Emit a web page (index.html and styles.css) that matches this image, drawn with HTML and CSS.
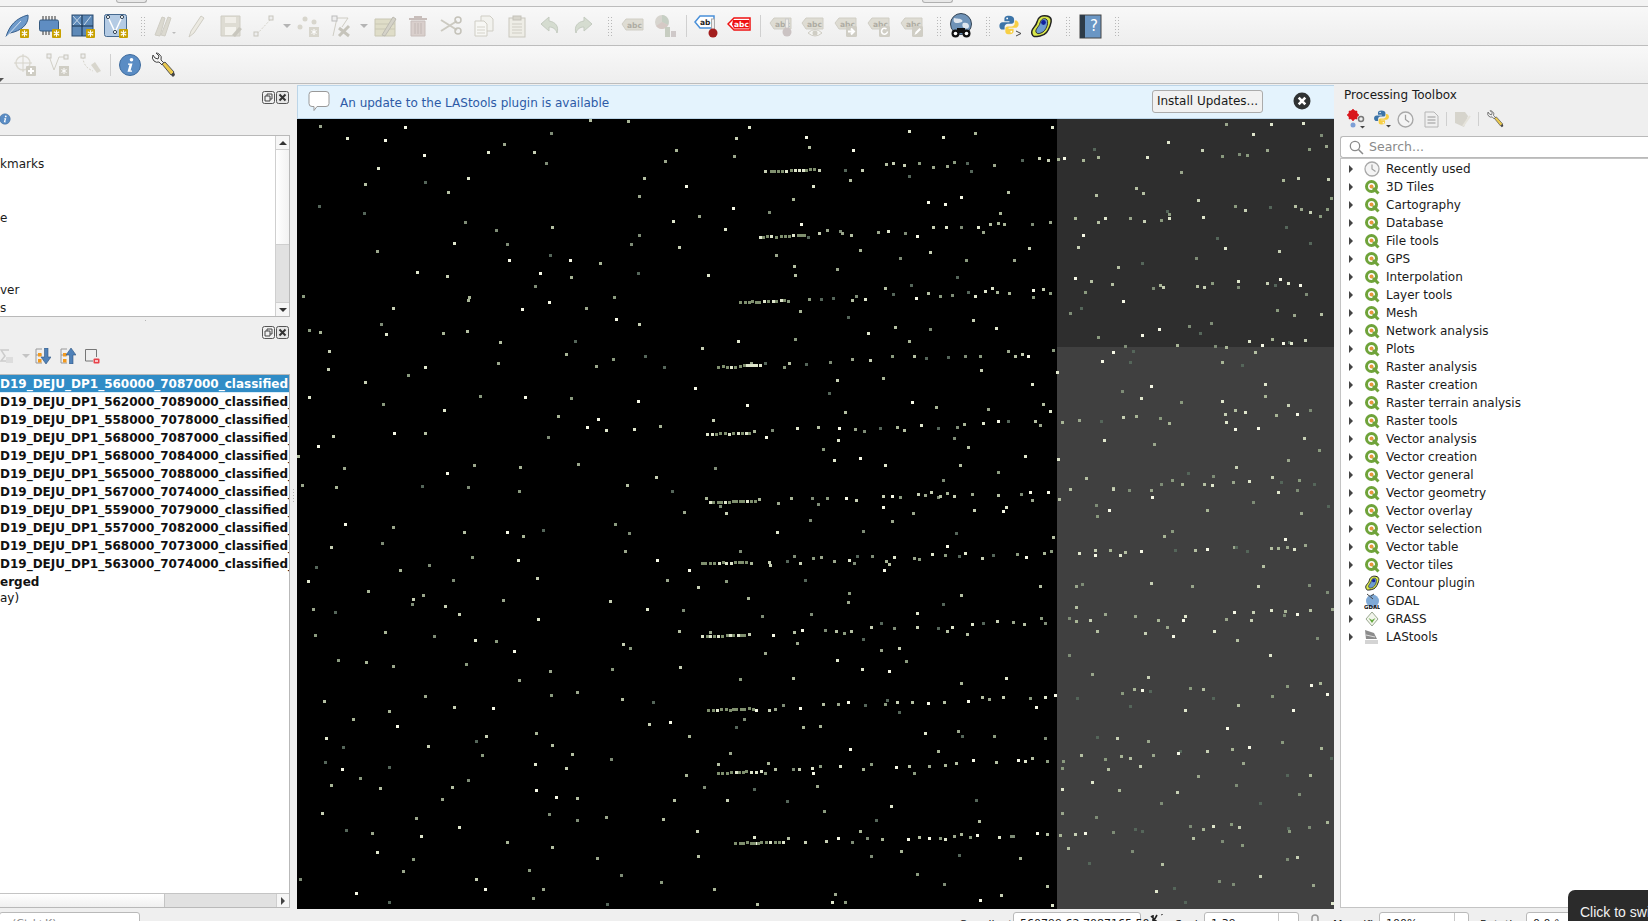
FILE: index.html
```html
<!DOCTYPE html>
<html lang="en">
<head>
<meta charset="utf-8">
<title>QGIS</title>
<link rel="stylesheet" href="styles.css">
</head>
<body>
<svg class="defs" width="0" height="0" aria-hidden="true">
  <defs>
    <symbol id="badge" viewBox="0 0 10 10"><rect width="10" height="10" rx="1" fill="#c8a100"/><path d="M5 1.500v7M2 3l6 4M8 3L2 7" stroke="#fff" stroke-width="1.300"/></symbol>
    <symbol id="q" viewBox="0 0 16 16"><circle cx="7.500" cy="7.500" r="5" fill="#fff" stroke="#6fa33a" stroke-width="3"/><circle cx="7.500" cy="7.500" r="2" fill="#e8963c"/><path d="M9 9l5.500 5.500" stroke="#6fa33a" stroke-width="3"/></symbol>
    <symbol id="clock" viewBox="0 0 16 16"><circle cx="8" cy="8" r="7" fill="#f4f4f4" stroke="#a8a8a8" stroke-width="1.300"/><path d="M8 3.500V8l3.500 2.500" fill="none" stroke="#a0a0a0" stroke-width="1.200"/></symbol>
    <symbol id="python" viewBox="0 0 24 24"><path d="M12 2C8 2 7 3.500 7 5.500V8h5.500v1H5c-2 0-3.500 1.500-3.500 4s1.500 4 3.500 4h2.200v-3c0-2 1.500-3.500 3.500-3.500h4.300c1.500 0 2.500-1 2.500-2.500V5.500C17.500 3.500 15.500 2 12 2z" fill="#3c74a8"/><path d="M12 22c4 0 5-1.500 5-3.500V16h-5.500v-1H19c2 0 3.500-1.500 3.500-4S21 7 19 7h-.8v3c0 2-1.500 3.500-3.500 3.500h-4.300C8.900 13.500 8 14.500 8 16v2.500c0 2 .5 3.500 4 3.500z" fill="#f7cf45"/><circle cx="10" cy="4.800" r="1" fill="#fff"/><circle cx="14.500" cy="19.300" r="1" fill="#fff"/></symbol>
    <symbol id="contour" viewBox="0 0 24 24"><path d="M3 20C1 15 7 13 8 8s5-7 10-6 5 5 3 10-4 9-10 10-7 1-8-2z" fill="#d8e84a" stroke="#222" stroke-width="1.500"/><path d="M7 18c-1-3 3-5 4-9s4-5 6-4 2 4 1 7-3 6-6 7-4 1-5-1z" fill="#6c9cd0" stroke="#333"/><circle cx="14.500" cy="8.500" r="2.400" fill="#10209c"/></symbol>
    <symbol id="wrench" viewBox="0 0 26 26"><path d="M3 3a5 5 0 0 0 1 6 5 5 0 0 0 5 1l3 3 2-2-3-3a5 5 0 0 0-2-6 5 5 0 0 0-3-1l3 3-1 3-3-1z" fill="#f4f4f4" stroke="#444"/><path d="M12 12l3-2 9 10-3 3z" fill="#eac94e" stroke="#555"/><path d="M21 23l3-3 1 3-2 2z" fill="#444"/></symbol>
    <symbol id="abc" viewBox="0 0 24 24"><path d="M2 10l4-5h17v11H6z" fill="#dedcd3" stroke="#d0cec5"/><text x="7" y="13.500" class="tag-text tag-dim">abc</text></symbol>
    <symbol id="dock" viewBox="0 0 13 13"><rect x=".5" y=".5" width="12" height="12" rx="2" fill="#f0f0f0" stroke="#555"/><path d="M3 5h5v5H3zM5 5V3h5v5H8" fill="none" stroke="#444"/></symbol>
    <symbol id="closebox" viewBox="0 0 13 13"><rect x=".5" y=".5" width="12" height="12" rx="2" fill="#e6e6e6" stroke="#555"/><path d="M3.500 3.500l6 6M9.500 3.500l-6 6" stroke="#333" stroke-width="2"/></symbol>
    <symbol id="info" viewBox="0 0 24 24"><circle cx="12" cy="12" r="10.500" fill="#5a8cc4" stroke="#3f6c9e"/><circle cx="13.500" cy="6.800" r="1.800" fill="#fff"/><path d="M10 10.500h4.500L12.500 17.500h1.500v1.200H9.500l2-7H10z" fill="#fff"/></symbol>
  </defs>
</svg>

<div class="strip"><span class="tab tab-a"></span><span class="tab tab-b"></span></div>

<div class="toolbar">
  <span class="tool"><svg width="26" height="26" viewBox="0 0 26 26"><path d="M2 24C5 13 12 5 24 2c1 7-4 14-14 17l-4 1z" fill="#6f9bcb" stroke="#375f8c"/><path d="M2 24L17 8" stroke="#d5e3f2"/><use href="#badge" x="16" y="16" width="9" height="9"/></svg></span>
  <span class="tool"><svg width="26" height="26" viewBox="0 0 26 26"><path d="M6 3v4M9 3v4M12 3v4M15 3v4M18 3v4M6 18v4M9 18v4M12 18v4" stroke="#333"/><rect x="2.500" y="7" width="19" height="11" rx="1.500" fill="#5f8dc2" stroke="#35597f"/><use href="#badge" x="15" y="16" width="9" height="9"/></svg></span>
  <span class="tool"><svg width="26" height="26" viewBox="0 0 26 26"><rect x="2" y="2" width="21" height="21" fill="#5d89b8" stroke="#2a4a6e"/><path d="M2 13h21M12 2v21" stroke="#17304d"/><path d="M3 3l8 9M11 3l-8 9M14 12l7-9" stroke="#c8d9ea"/><use href="#badge" x="16" y="16" width="9" height="9"/></svg></span>
  <span class="tool"><svg width="26" height="26" viewBox="0 0 26 26"><rect x="1.500" y="1.500" width="22" height="22" rx="2" fill="#b4cbe4" stroke="#46698f"/><path d="M5 4l7 15 7-15" fill="none" stroke="#fff" stroke-width="1.500"/><circle cx="5" cy="4" r="1.600" fill="#fff" stroke="#345"/><circle cx="19" cy="4" r="1.600" fill="#fff" stroke="#345"/><circle cx="12" cy="19" r="1.600" fill="#fff" stroke="#345"/><use href="#badge" x="16" y="16" width="9" height="9"/></svg></span>
  <span class="grip"></span>
  <span class="tool"><svg width="24" height="24" viewBox="0 0 24 24"><path d="M2 21L9 3l3 1-5 18zM8 21l7-18 3 1-6 18z" fill="#dbd9d0" stroke="#cfcdc4"/><path d="M19 18h4l-2 2z" fill="#bbb"/></svg></span>
  <span class="tool tool-narrow"><svg width="24" height="24" viewBox="0 0 24 24"><path d="M5 23l2-6L17 2l3 2-10 15z" fill="#eceae2" stroke="#cfcdc4"/></svg></span>
  <span class="tool"><svg width="24" height="24" viewBox="0 0 24 24"><path d="M2 2h19v20H2z" fill="#dedcd3" stroke="#cfcdc4"/><rect x="6" y="3" width="11" height="6" fill="#f0eee8"/><rect x="6" y="13" width="11" height="8" fill="#f4f3ee"/><path d="M13 21l7-8 3 2-7 8z" fill="#c9c7be"/></svg></span>
  <span class="tool tool-drop"><svg width="22" height="24" viewBox="0 0 22 24"><path d="M4 20L18 5" stroke="#d5d3ca" stroke-dasharray="2 1.500"/><rect x="1" y="18" width="4" height="4" fill="#eee" stroke="#c8c6bd"/><rect x="16" y="2" width="4" height="4" fill="#eee" stroke="#c8c6bd"/></svg><i class="caret"></i></span>
  <span class="tool"><svg width="24" height="24" viewBox="0 0 24 24"><circle cx="9" cy="5" r="2.500" fill="#d8d6cd"/><circle cx="18" cy="8" r="2.500" fill="#d8d6cd"/><circle cx="4" cy="13" r="2.500" fill="#d8d6cd"/><rect x="13" y="13" width="10" height="10" fill="#d8d6cd"/><path d="M18 15v6M15.500 16.500l5 3M20.500 16.500l-5 3" stroke="#fff"/></svg></span>
  <span class="tool tool-drop"><svg width="22" height="24" viewBox="0 0 22 24"><path d="M3 22L7 4h11L12 13" fill="none" stroke="#cfcdc4"/><path d="M9 14l10 8M19 12L9 22" stroke="#c6c4bb" stroke-width="3"/><rect x="2" y="2" width="5" height="5" fill="#eee" stroke="#bbb"/></svg><i class="caret"></i></span>
  <span class="tool"><svg width="24" height="24" viewBox="0 0 24 24"><path d="M2 5h20v17H2z" fill="#dfddc8" stroke="#c9c7b4"/><path d="M2 10h20M2 15h20" stroke="#c9c7b4"/><path d="M9 21L20 3l3 2-11 17z" fill="#d4d2c8" stroke="#bdbbb2"/></svg></span>
  <span class="tool"><svg width="22" height="24" viewBox="0 0 22 24"><path d="M2 5h18M8 5V3h6v2" fill="none" stroke="#c8bebb" stroke-width="2"/><path d="M4 7h14v15H4z" fill="#d9cfcc" stroke="#c8bebb"/><path d="M8 9v11M11 9v11M14 9v11" stroke="#c2b8b5"/></svg></span>
  <span class="tool"><svg width="24" height="24" viewBox="0 0 24 24"><path d="M2 6l16 10M2 17L18 7" stroke="#cccac1" stroke-width="2"/><circle cx="19" cy="6" r="3" fill="none" stroke="#c4c2b9" stroke-width="1.500"/><circle cx="19" cy="17" r="3" fill="none" stroke="#c4c2b9" stroke-width="1.500"/></svg></span>
  <span class="tool"><svg width="20" height="24" viewBox="0 0 20 24"><path d="M7 2h9l3 3v12H7z" fill="#f2f2ee" stroke="#cfcdc4"/><path d="M1 7h9l3 3v12H1z" fill="#f7f7f4" stroke="#cfcdc4"/><path d="M3 13h8M3 16h8M3 19h8" stroke="#d5d3ca"/></svg></span>
  <span class="tool"><svg width="20" height="24" viewBox="0 0 20 24"><rect x="2" y="4" width="16" height="19" fill="#eeede6" stroke="#c9c7be"/><rect x="6" y="2" width="8" height="4" fill="#d8d6cd" stroke="#c4c2b9"/><path d="M5 10h10M5 13h10M5 16h10M5 19h10" stroke="#cfcdc4"/></svg></span>
  <span class="tool"><svg width="22" height="22" viewBox="0 0 22 22"><path d="M10 2L2 9l8 7v-4c4 0 7 2 8 6 2-6-1-11-8-12z" fill="#d5dcd0" stroke="#c4cbc0"/></svg></span>
  <span class="tool"><svg width="22" height="22" viewBox="0 0 22 22"><path d="M12 2l8 7-8 7v-4c-4 0-7 2-8 6-2-6 1-11 8-12z" fill="#d5dcd0" stroke="#c4cbc0"/></svg></span>
  <span class="grip"></span>
  <span class="tool"><svg width="24" height="24"><use href="#abc"/></svg></span>
  <span class="tool"><svg width="24" height="24" viewBox="0 0 24 24"><circle cx="9" cy="8" r="7" fill="#d7d5cf"/><path d="M9 8V1a7 7 0 0 1 6 10z" fill="#c6cfc4"/><path d="M9 8l6 3a7 7 0 0 1-12 1z" fill="#d5c9c5"/><rect x="12" y="13" width="5" height="10" fill="#c7cdc1"/><rect x="18" y="17" width="5" height="6" fill="#cfc9c9"/></svg></span>
  <span class="sep"></span>
  <span class="tool"><svg width="24" height="26" viewBox="0 0 24 26"><path d="M1 9l5-6h14v12H6z" fill="#fff" stroke="#4a90d9" stroke-width="1.500"/><text x="6" y="12" class="tag-text tag-dark">ab</text><rect x="17.500" y="6" width="3" height="11" fill="#eee" stroke="#aaa"/><circle cx="19" cy="20" r="4.500" fill="#a31d1d"/></svg></span>
  <span class="tool"><svg width="24" height="24" viewBox="0 0 24 24"><path d="M1 10l6-6h16v12H7z" fill="#fff" stroke="#ee1111" stroke-width="1.500"/><path d="M6 6h16v8.500H7l-2-4z" fill="#ee1111"/><text x="7" y="13.200" class="tag-text tag-light">abc</text></svg></span>
  <span class="sep"></span>
  <span class="tool"><svg width="24" height="26" viewBox="0 0 24 26"><use href="#abc" width="24" height="24"/><rect x="17.500" y="6" width="3" height="11" fill="#eeedea" stroke="#ccc"/><circle cx="19" cy="19" r="4.500" fill="#cbc3c3"/></svg></span>
  <span class="tool"><svg width="26" height="26" viewBox="0 0 26 26"><use href="#abc" width="24" height="24"/><path d="M8 20q7-7 14 0-7 6-14 0z" fill="#f3f3f0" stroke="#cfcdc4"/><circle cx="15" cy="20" r="2.500" fill="#cfcdc4"/></svg></span>
  <span class="tool"><svg width="26" height="26" viewBox="0 0 26 26"><use href="#abc" width="24" height="24"/><rect x="13" y="13" width="11" height="11" rx="1.500" fill="#d0cec5"/><path d="M15 18.500h5M18 15.500l3 3-3 3" fill="none" stroke="#fff" stroke-width="2"/></svg></span>
  <span class="tool"><svg width="26" height="26" viewBox="0 0 26 26"><use href="#abc" width="24" height="24"/><rect x="13" y="13" width="11" height="11" rx="1.500" fill="#d0cec5"/><path d="M21.500 18.500a3 3 0 1 1-1-2.500" fill="none" stroke="#fff" stroke-width="1.500"/></svg></span>
  <span class="tool"><svg width="26" height="26" viewBox="0 0 26 26"><use href="#abc" width="24" height="24"/><rect x="13" y="13" width="11" height="11" rx="1.500" fill="#d0cec5"/><path d="M15.500 22l1-3 4-4 1.500 1.500-4 4z" fill="#fff"/></svg></span>
  <span class="grip"></span>
  <span class="tool"><svg width="26" height="26" viewBox="0 0 26 26"><circle cx="13" cy="11" r="10.500" fill="#6f93b8" stroke="#345"/><path d="M6 5c3 1 6 0 8 2s-2 3-5 3-4-2-3-5zM15 10c3-1 6 0 6 3s-3 3-5 2-2-4-1-5z" fill="#dfe6ee"/><circle cx="7.500" cy="20.500" r="4" fill="#111"/><circle cx="18.500" cy="20.500" r="4" fill="#111"/><circle cx="7.500" cy="20.500" r="1.800" fill="#fff"/><circle cx="18.500" cy="20.500" r="1.800" fill="#fff"/><rect x="9" y="15" width="8" height="5" fill="#111"/></svg></span>
  <span class="grip"></span>
  <span class="tool tool-py"><svg width="26" height="26" viewBox="0 0 26 26"><use href="#python" width="22" height="22" y="1"/><path d="M18 18l5 2.500-5 2.500" fill="none" stroke="#444"/></svg></span>
  <span class="tool"><svg width="24" height="24"><use href="#contour"/></svg></span>
  <span class="grip"></span>
  <span class="tool"><svg width="24" height="26" viewBox="0 0 24 26"><rect x="2" y="2" width="21" height="23" fill="#6a96c4" stroke="#444"/><rect x="2" y="2" width="5" height="23" fill="#2d3b48"/></svg><span class="qmark">?</span></span>
  <span class="grip"></span>
</div>

<div class="toolbar toolbar-two">
  <i class="caret caret-edge"></i>
  <span class="tool"><svg width="24" height="24" viewBox="0 0 24 24"><circle cx="10" cy="10" r="7" fill="none" stroke="#dcdad2" stroke-width="1.500"/><path d="M10 1v18M1 10h18" stroke="#d6d4cb"/><rect x="13" y="13" width="10" height="10" rx="1" fill="#cfcdc4"/><path d="M15 18h6M18 15v6" stroke="#fff" stroke-width="2"/></svg></span>
  <span class="tool"><svg width="24" height="24" viewBox="0 0 24 24"><path d="M3 3l5 14 5-13h7" fill="none" stroke="#d2d0c7"/><rect x="1" y="1" width="4" height="4" fill="#eee" stroke="#c8c6bd"/><rect x="18" y="2" width="4" height="4" fill="#eee" stroke="#c8c6bd"/><rect x="13" y="13" width="10" height="10" fill="#cfcdc4"/><path d="M18 15v6M15.500 16.500l5 3M20.500 16.500l-5 3" stroke="#fff"/></svg></span>
  <span class="tool"><svg width="22" height="24" viewBox="0 0 22 24"><path d="M3 4c0 8 5 12 10 14" fill="none" stroke="#d5d3ca" stroke-dasharray="2 1.500"/><rect x="1" y="1" width="4" height="4" fill="#eee" stroke="#c8c6bd"/><path d="M11 12l4-3 6 9-4 2z" fill="#d8d6cd"/></svg></span>
  <span class="sep sep-tight"></span>
  <span class="tool"><svg width="24" height="24"><use href="#info"/></svg></span>
  <span class="tool"><svg width="26" height="26"><use href="#wrench"/></svg></span>
</div>

<main class="workspace">
  <aside class="left-dock">
    <div class="dock-title"><svg width="13" height="13"><use href="#dock"/></svg><svg width="13" height="13"><use href="#closebox"/></svg></div>
    <div class="dock-tools"><svg class="edge-info" width="12" height="12"><use href="#info"/></svg></div>
    <div class="browser">
      <ul class="rows">
        <li></li><li>kmarks</li><li></li><li></li><li>e</li><li></li><li></li><li></li><li>ver</li><li>s</li>
      </ul>
      <div class="vscroll">
        <span class="scroll-btn"><i class="tri tri-up"></i></span>
        <span class="vscroll-track"></span>
        <span class="vscroll-thumb"></span>
        <span class="scroll-btn"><i class="tri tri-down"></i></span>
      </div>
    </div>
    <div class="splitter"></div>
    <div class="dock-title dock-title-layers"><svg width="13" height="13"><use href="#dock"/></svg><svg width="13" height="13"><use href="#closebox"/></svg></div>
    <div class="layer-tools">
      <svg width="14" height="16" viewBox="0 0 14 16"><path d="M9 2H1l4 6-4 5h8" fill="none" stroke="#ccc" stroke-width="1.500"/><rect x="6" y="9" width="7" height="6" fill="#ddd"/></svg>
      <i class="caret caret-tools"></i>
      <svg class="lt-a" width="16" height="16" viewBox="0 0 16 16"><path d="M1 1h6M1 1v14h6M1 7h6" fill="none" stroke="#999"/><rect x="3" y="5" width="3.500" height="3.500" fill="#f29a1e"/><rect x="3" y="11" width="3.500" height="3.500" fill="#f29a1e"/><path d="M9.500 0h3.500v9h3l-5 7-5-7h3.500z" fill="#4f81b8" stroke="#2f557f" stroke-width=".6"/></svg>
      <svg class="lt-b" width="16" height="16" viewBox="0 0 16 16"><path d="M1 1h6M1 1v14h6M1 7h6" fill="none" stroke="#999"/><rect x="3" y="5" width="3.500" height="3.500" fill="#f29a1e"/><rect x="3" y="11" width="3.500" height="3.500" fill="#f29a1e"/><path d="M9.500 16h3.500V7h3L11 0 6 7h3.500z" fill="#4f81b8" stroke="#2f557f" stroke-width=".6"/></svg>
      <svg class="lt-c" width="15" height="15" viewBox="0 0 15 15"><path d="M8 12H.5V.5h11V8" fill="none" stroke="#777"/><rect x="8.500" y="9.500" width="6" height="5" rx="1" fill="#e8424a"/><path d="M10 12h3" stroke="#fff" stroke-width="1.400"/></svg>
    </div>
    <div class="layers">
      <ul class="layer-rows">
        <li class="selected">D19_DEJU_DP1_560000_7087000_classified</li>
        <li>D19_DEJU_DP1_562000_7089000_classified_</li>
        <li>D19_DEJU_DP1_558000_7078000_classified_</li>
        <li>D19_DEJU_DP1_568000_7087000_classified_</li>
        <li>D19_DEJU_DP1_568000_7084000_classified_</li>
        <li>D19_DEJU_DP1_565000_7088000_classified_</li>
        <li>D19_DEJU_DP1_567000_7074000_classified_</li>
        <li>D19_DEJU_DP1_559000_7079000_classified_</li>
        <li>D19_DEJU_DP1_557000_7082000_classified_</li>
        <li>D19_DEJU_DP1_568000_7073000_classified_</li>
        <li>D19_DEJU_DP1_563000_7074000_classified_</li>
        <li>erged</li>
        <li class="plain">ay)</li>
      </ul>
      <div class="hscroll">
        <span class="hscroll-thumb"></span>
        <span class="hscroll-track"></span>
        <span class="scroll-btn scroll-btn-h"><i class="tri tri-right"></i></span>
      </div>
    </div>
  </aside>

  <div class="gutter"><span class="gutter-grip"></span></div>

  <section class="canvas-col">
    <div class="message">
      <svg width="22" height="22" viewBox="0 0 22 22"><path d="M4 1.500h14a3 3 0 0 1 3 3v9a3 3 0 0 1-3 3H9l-3 4v-4H4a3 3 0 0 1-3-3v-9a3 3 0 0 1 3-3z" fill="#fff" stroke="#999"/></svg>
      <span class="message-text">An update to the LAStools plugin is available</span>
      <button class="install" type="button">Install Updates...</button>
      <svg class="message-close" width="18" height="18" viewBox="0 0 18 18"><circle cx="9" cy="9" r="8.500" fill="#2f3233"/><path d="M5.700 5.700l6.600 6.600M12.300 5.700l-6.600 6.600" stroke="#fff" stroke-width="2.600"/></svg>
    </div>
    <canvas id="map" class="map" width="1037" height="790"></canvas>
  </section>

  <div class="gutter gutter-right"></div>

  <aside class="toolbox">
    <div class="toolbox-title">Processing Toolbox</div>
    <div class="toolbox-tools">
      <svg class="tt-gear" width="20" height="20" viewBox="0 0 20 20"><circle cx="6" cy="6" r="3.500" fill="none" stroke="#d9161c" stroke-width="3"/><path d="M6 0v12M0 6h12M2 2l8 8M10 2l-8 8" stroke="#d9161c" stroke-width="1.500"/><circle cx="14" cy="10" r="2.500" fill="none" stroke="#777" stroke-width="1.500"/><circle cx="6" cy="16" r="2.500" fill="#7d9fd6"/><path d="M13 17h5l-2.500 2.500z" fill="#444"/></svg>
      <svg class="tt-py" width="20" height="20" viewBox="0 0 20 20"><use href="#python" width="17" height="17"/><path d="M13 16h5l-2.500 2.500z" fill="#444"/></svg>
      <svg class="tt-clock" width="17" height="17"><use href="#clock"/></svg>
      <svg class="tt-doc" width="15" height="17" viewBox="0 0 15 17"><path d="M1 1h9l4 4v11H1z" fill="#efefef" stroke="#b5b5b5"/><path d="M3.500 6h8M3.500 9h8M3.500 12h8" stroke="#b5b5b5" stroke-width="1.300"/></svg>
      <span class="tb-sep"></span>
      <svg class="tt-shape" width="17" height="17" viewBox="0 0 17 17"><path d="M1 1h10l3 4-4 11-9-4z" fill="#d6d4cc"/><path d="M9 15l7-10" stroke="#e5e3db" stroke-width="2"/></svg>
      <span class="tb-sep"></span>
      <svg class="tt-wrench" width="18" height="18"><use href="#wrench" width="18" height="18"/></svg>
    </div>
    <label class="search">
      <svg width="15" height="15" viewBox="0 0 15 15"><circle cx="6" cy="6" r="4.700" fill="none" stroke="#8a8a8a" stroke-width="1.300"/><path d="M9.500 9.500l4.500 4.500" stroke="#8a8a8a" stroke-width="1.500"/></svg>
      <span>Search...</span>
    </label>
    <ul class="tree">
      <li><i class="tri tri-right"></i><svg width="16" height="16"><use href="#clock"/></svg>Recently used</li>
      <li><i class="tri tri-right"></i><svg width="16" height="16"><use href="#q"/></svg>3D Tiles</li>
      <li><i class="tri tri-right"></i><svg width="16" height="16"><use href="#q"/></svg>Cartography</li>
      <li><i class="tri tri-right"></i><svg width="16" height="16"><use href="#q"/></svg>Database</li>
      <li><i class="tri tri-right"></i><svg width="16" height="16"><use href="#q"/></svg>File tools</li>
      <li><i class="tri tri-right"></i><svg width="16" height="16"><use href="#q"/></svg>GPS</li>
      <li><i class="tri tri-right"></i><svg width="16" height="16"><use href="#q"/></svg>Interpolation</li>
      <li><i class="tri tri-right"></i><svg width="16" height="16"><use href="#q"/></svg>Layer tools</li>
      <li><i class="tri tri-right"></i><svg width="16" height="16"><use href="#q"/></svg>Mesh</li>
      <li><i class="tri tri-right"></i><svg width="16" height="16"><use href="#q"/></svg>Network analysis</li>
      <li><i class="tri tri-right"></i><svg width="16" height="16"><use href="#q"/></svg>Plots</li>
      <li><i class="tri tri-right"></i><svg width="16" height="16"><use href="#q"/></svg>Raster analysis</li>
      <li><i class="tri tri-right"></i><svg width="16" height="16"><use href="#q"/></svg>Raster creation</li>
      <li><i class="tri tri-right"></i><svg width="16" height="16"><use href="#q"/></svg>Raster terrain analysis</li>
      <li><i class="tri tri-right"></i><svg width="16" height="16"><use href="#q"/></svg>Raster tools</li>
      <li><i class="tri tri-right"></i><svg width="16" height="16"><use href="#q"/></svg>Vector analysis</li>
      <li><i class="tri tri-right"></i><svg width="16" height="16"><use href="#q"/></svg>Vector creation</li>
      <li><i class="tri tri-right"></i><svg width="16" height="16"><use href="#q"/></svg>Vector general</li>
      <li><i class="tri tri-right"></i><svg width="16" height="16"><use href="#q"/></svg>Vector geometry</li>
      <li><i class="tri tri-right"></i><svg width="16" height="16"><use href="#q"/></svg>Vector overlay</li>
      <li><i class="tri tri-right"></i><svg width="16" height="16"><use href="#q"/></svg>Vector selection</li>
      <li><i class="tri tri-right"></i><svg width="16" height="16"><use href="#q"/></svg>Vector table</li>
      <li><i class="tri tri-right"></i><svg width="16" height="16"><use href="#q"/></svg>Vector tiles</li>
      <li><i class="tri tri-right"></i><svg width="16" height="16"><use href="#contour"/></svg>Contour plugin</li>
      <li><i class="tri tri-right"></i><svg width="16" height="16" viewBox="0 0 16 16"><ellipse cx="8.500" cy="8" rx="6.500" ry="6.500" fill="#7fa9d6"/><path d="M3 1l6 5M7 3l3-2" stroke="#444"/><text x="0" y="15.500" class="gdal-text">GDAL</text></svg>GDAL</li>
      <li><i class="tri tri-right"></i><svg width="16" height="16" viewBox="0 0 16 16"><path d="M8 1l6 7-6 7-6-7z" fill="#f2f5ec" stroke="#9aa890"/><path d="M4.500 7L8 12l3.500-5L8 9z" fill="#63a83c"/></svg>GRASS</li>
      <li><i class="tri tri-right"></i><svg width="16" height="16" viewBox="0 0 16 16"><path d="M1 1l9 3 3 6H2z" fill="#8c8c8c"/><path d="M2 6l9 2" stroke="#ddd"/><rect x="1" y="11" width="13" height="4" fill="#d4d4d4"/></svg>LAStools</li>
    </ul>
  </aside>
</main>

<footer class="status">
  <span class="field field-locate">(Ctrl+K)</span>
  <span class="status-label label-coord">Coordinate</span>
  <span class="field field-coord">560799.62,7087165.50</span>
  <svg class="status-ico" width="16" height="14" viewBox="0 0 16 14"><path d="M3 2l9 9M5 1v9M9 1l-5 9" stroke="#222" stroke-width="1.600"/><path d="M13 1l2-1" stroke="#444"/></svg>
  <span class="status-label label-scale">Scale</span>
  <span class="field field-scale">1:39<span class="field-drop"></span></span>
  <svg class="status-lock" width="14" height="14" viewBox="0 0 14 14"><path d="M4 8V5a3 3 0 0 1 6 0v3" fill="none" stroke="#999" stroke-width="1.500"/></svg>
  <span class="status-label label-mag">Magnifier</span>
  <span class="field field-mag">100%<span class="spin"></span></span>
  <span class="status-label label-rot">Rotation</span>
  <span class="field field-rot">0.0 °</span>
</footer>

<div class="toast">Click to switch</div>

<script src="script.js"></script>
</body>
</html>
```
FILE: styles.css
```css
* { box-sizing: border-box; }
html, body { margin: 0; padding: 0; height: 921px; overflow: hidden; }
body { width: 1648px; background: #efefef; font: 12px/18px "DejaVu Sans", sans-serif; color: #1a1a1a; position: relative; }
ul { list-style: none; margin: 0; padding: 0; }
svg { display: block; flex: none; }
.defs { position: absolute; }

.tag-text { font: 700 7.500px "DejaVu Sans", sans-serif; }
.tag-dim { fill: #aeaca3; }
.tag-dark { fill: #222222; }
.tag-light { fill: #ffffff; }
.gdal-text { font: 700 5.400px "DejaVu Sans", sans-serif; fill: #111111; }

.strip { height: 7px; background: #f3f3f3; border-bottom: 1px solid #bcbcbc; display: flex; align-items: flex-start; }
.tab { display: block; width: 31px; height: 3px; background: #e8e8e8; border: 1px solid #b0b0b0; border-top: 0; border-radius: 0 0 3px 3px; }
.tab-a { margin-left: 116px; }
.tab-b { margin-left: 775px; }

.toolbar { height: 39px; display: flex; align-items: center; background: linear-gradient(#f8f8f8, #eeeeee); border-bottom: 1px solid #bdbdbd; }
.toolbar-two { height: 38px; border-bottom-width: 1px; }
.tool { width: 33px; height: 30px; display: flex; align-items: center; justify-content: center; flex: none; position: relative; }
.tool-narrow { padding-right: 4px; }
.tool-py { margin-right: -2px; padding-left: 3px; }
.tool-drop { width: 44px; justify-content: flex-start; padding-left: 6px; gap: 8px; }
.caret { display: block; width: 0; height: 0; border: 4px solid transparent; border-top: 4px solid #b4b4b4; border-bottom: 0; }
.caret-edge { position: relative; top: 15px; margin-right: 4px; border-left-width: 0; border-top-color: #555; }
.grip { width: 5px; height: 20px; margin: 0 3px 0 8px; background: radial-gradient(circle, #b8b8b8 0.8px, transparent 1px) 0 0 / 3px 3px; flex: none; }
.sep { width: 1px; height: 22px; margin: 0 2px 0 5px; background: #d0d0d0; flex: none; }
.sep-tight { margin-left: 3px; }
.qmark { position: absolute; left: 14px; top: 5px; width: 14px; text-align: center; color: #fff; font: 15px/20px "DejaVu Sans", sans-serif; }

.workspace { display: flex; height: 824px; }
.left-dock { width: 290px; display: flex; flex-direction: column; flex: none; }
.dock-title { height: 20px; display: flex; justify-content: flex-end; align-items: flex-end; gap: 1px; padding-right: 1px; }
.dock-tools { height: 31px; padding-top: 9px; }
.edge-info { margin-left: -1px; }
.browser { height: 182px; display: flex; background: #fff; border: 1px solid #b9b9b9; border-left: 0; }
.rows { flex: 1; padding-top: 1px; overflow: hidden; }
.rows li { height: 18px; line-height: 18px; }
.vscroll { width: 14px; display: flex; flex-direction: column; background: linear-gradient(90deg, #ffffff, #f2f2f2); border-left: 1px solid #cfcfcf; flex: none; }
.scroll-btn { height: 14px; display: flex; align-items: center; justify-content: center; flex: none; background: #f6f6f6; border-bottom: 1px solid #cfcfcf; }
.vscroll .scroll-btn:last-child { border-bottom: 0; border-top: 1px solid #cfcfcf; }
.vscroll-track { flex: 1; }
.vscroll-thumb { height: 58px; background: #e1e1e1; border-top: 1px solid #cfcfcf; }
.tri { display: block; width: 0; height: 0; border: 4px solid transparent; flex: none; }
.tri-up { border-top: 0; border-bottom: 4px solid #333; }
.tri-down { border-bottom: 0; border-top: 4px solid #333; }
.tri-right { border-right: 0; border-left: 4px solid #444; }
.splitter { height: 7px; background: radial-gradient(circle, #b5b5b5 0.6px, transparent 1px) center / 3px 3px no-repeat; }
.dock-title-layers { height: 15px; }
.layer-tools { height: 35px; display: flex; align-items: center; padding-bottom: 1px; }
.caret-tools { margin-left: 8px; border-top-color: #c4c4c4; }
.lt-a { margin-left: 5px; }
.lt-b { margin-left: 9px; }
.lt-c { margin-left: 9px; }
.layers { flex: 1; min-height: 0; display: flex; flex-direction: column; background: #fff; border: 1px solid #b9b9b9; border-left: 0; }
.layer-rows { flex: 1; overflow: hidden; }
.layer-rows li { height: 18px; line-height: 18px; font-weight: 700; white-space: nowrap; overflow: hidden; color: #111; }
.layer-rows .selected { background: #308cc6; color: #fff; border-bottom: 1px solid #d9ecf8; line-height: 18px; }
.layer-rows .plain { font-weight: 400; height: 16px; line-height: 14px; }
.hscroll { height: 14px; display: flex; border-top: 1px solid #c4c4c4; flex: none; }
.hscroll-thumb { width: 165px; background: linear-gradient(#ffffff, #f0f0f0); border-right: 1px solid #c4c4c4; }
.hscroll-track { flex: 1; background: #e1e1e1; }
.scroll-btn-h { width: 13px; height: 13px; border-bottom: 0; border-left: 1px solid #cfcfcf; }

.gutter { width: 7px; flex: none; display: flex; align-items: center; justify-content: center; }
.gutter-right { width: 6px; }
.gutter-grip { width: 3px; height: 16px; background: radial-gradient(circle, #b0b0b0 0.7px, transparent 1px) 0 0 / 3px 3px; }

.canvas-col { width: 1037px; display: flex; flex-direction: column; flex: none; }
.message { height: 34px; margin-top: 1px; flex: none; display: flex; align-items: center; padding: 0 0 2px 10px; background: #e4f3fd; border: 1px solid #bcd5e8; border-right-width: 0; }
.message-text { margin: 4px 0 0 10px; color: #2c5aa6; font-size: 12px; flex: 1; }
.install { width: 111px; height: 23px; padding: 0; background: #f1f1f1; border: 1px solid #ababab; border-radius: 3px; font: 12px "DejaVu Sans", sans-serif; color: #1a1a1a; }
.message-close { margin: 0 23px 0 30px; }
.map { display: block; width: 1037px; height: 790px; flex: none; }

.toolbox { flex: 1; min-width: 0; display: flex; flex-direction: column; }
.toolbox-title { height: 20px; padding: 2px 0 0 4px; line-height: 18px; }
.toolbox-tools { height: 30px; display: flex; align-items: center; }
.tt-gear { margin-left: 7px; }
.tt-py { margin-left: 6px; }
.tt-clock { margin-left: 4px; }
.tt-doc { margin-left: 10px; }
.tb-sep { width: 1px; height: 14px; margin: 0 7px; background: #cfcfcf; }
.search { height: 22px; margin-top: 2px; display: flex; align-items: center; gap: 5px; padding-left: 8px; background: #fff; border: 1px solid #b9b9b9; border-right: 0; border-radius: 3px 0 0 3px; color: #8a8a8a; font-size: 12.500px; }
.tree { flex: 1; padding-top: 1px; background: #fff; border: 1px solid #c4c4c4; border-right: 0; }
.tree li { height: 18px; display: flex; align-items: center; padding-left: 8px; white-space: nowrap; }
.tree li svg { margin: 0 6px 0 11px; }

.status { height: 13px; display: flex; align-items: flex-start; overflow: hidden; background: #efefef; }
.field { height: 24px; margin-top: 4px; background: #fff; border: 1px solid #b9b9b9; border-radius: 3px; padding-left: 6px; font-size: 11px; line-height: 22px; flex: none; position: relative; white-space: nowrap; }
.field-locate { width: 141px; margin-left: -1px; padding-left: 12px; color: #888; }
.status-label { margin-top: 6px; flex: none; font-size: 11px; line-height: 22px; }
.label-coord { margin-left: 819px; width: 54px; }
.field-coord { width: 128px; }
.status-ico { margin: 6px 0 0 7px; }
.label-scale { margin-left: 11px; width: 29px; }
.field-scale { width: 95px; }
.field-drop { position: absolute; right: 0; top: 0; bottom: 0; width: 20px; border-left: 1px solid #c8c8c8; }
.status-lock { margin: 5px 0 0 9px; }
.label-mag { margin-left: 11px; width: 46px; }
.field-mag { width: 90px; }
.spin { position: absolute; right: 0; top: 0; bottom: 0; width: 14px; border-left: 1px solid #c8c8c8; }
.label-rot { margin-left: 11px; width: 46px; }
.field-rot { width: 60px; }

.toast { position: absolute; left: 1568px; top: 890px; width: 80px; height: 31px; overflow: hidden; padding: 12px 0 0 12px; background: #2b2b2b; border-radius: 7px 0 0 0; color: #f2f2f2; font: 14px/20px "Liberation Sans", sans-serif; white-space: nowrap; }
```
FILE: script.js
```js
(function () {
  var canvas = document.getElementById('map');
  var ctx = canvas.getContext('2d');
  var W = canvas.width, H = canvas.height;
  var seed = 20190611;

  function rnd() {
    seed = (seed * 1664525 + 1013904223) >>> 0;
    return seed / 4294967296;
  }

  ctx.fillStyle = '#000000';
  ctx.fillRect(0, 0, 760, H);
  ctx.fillStyle = '#2e2e2e';
  ctx.fillRect(760, 0, W - 760, 228);
  ctx.fillStyle = '#404040';
  ctx.fillRect(760, 228, W - 760, H - 228);

  var palette = ['#b4bfa2', '#a8b596', '#c6cfb4', '#9aa68c', '#dfe6cc', '#f6f8e6', '#7e8c76', '#55665a', '#8a9a7e'];

  function dot(x, y, size, colour) {
    ctx.fillStyle = colour;
    ctx.fillRect(Math.round(x), Math.round(y), size, size);
  }

  // scattered returns
  for (var gx = 0; gx < W; gx += 30) {
    for (var gy = 0; gy < H; gy += 30) {
      if (rnd() < 0.78) {
        var px = gx + rnd() * 30, py = gy + rnd() * 30;
        if (px < 760 && rnd() < 0.18) { continue; }
        dot(px, py, 3, palette[Math.floor(rnd() * palette.length)]);
      }
    }
  }

  // flight-line streaks, in canvas coordinates
  var streaks = [
    [473, 51, 754, 40], [462, 117, 754, 103], [442, 182, 754, 171], [420, 247, 754, 232],
    [409, 314, 743, 302], [412, 382, 744, 371], [404, 443, 754, 434], [404, 516, 754, 502],
    [410, 590, 754, 576], [420, 653, 754, 639], [437, 723, 754, 713]
  ];

  streaks.forEach(function (s) {
    var length = s[2] - s[0];
    var slope = (s[3] - s[1]) / length;
    var x = 0;
    while (x < length + 280) {
      var head = x < 45;
      var sx = s[0] + x;
      if (sx >= W) { break; }
      if (sx <= s[2] || rnd() > 0.35) {
        var sy = s[1] + slope * x + (rnd() - 0.5) * (head ? 1 : 6);
        var colour = head ? (rnd() < 0.25 ? '#dfe6cc' : '#7f8f6e') : palette[Math.floor(rnd() * palette.length)];
        dot(sx, sy, 3, colour);
      }
      x += head ? 3 + rnd() * 2 : 6 + rnd() * 22;
    }
  });
})();
```
